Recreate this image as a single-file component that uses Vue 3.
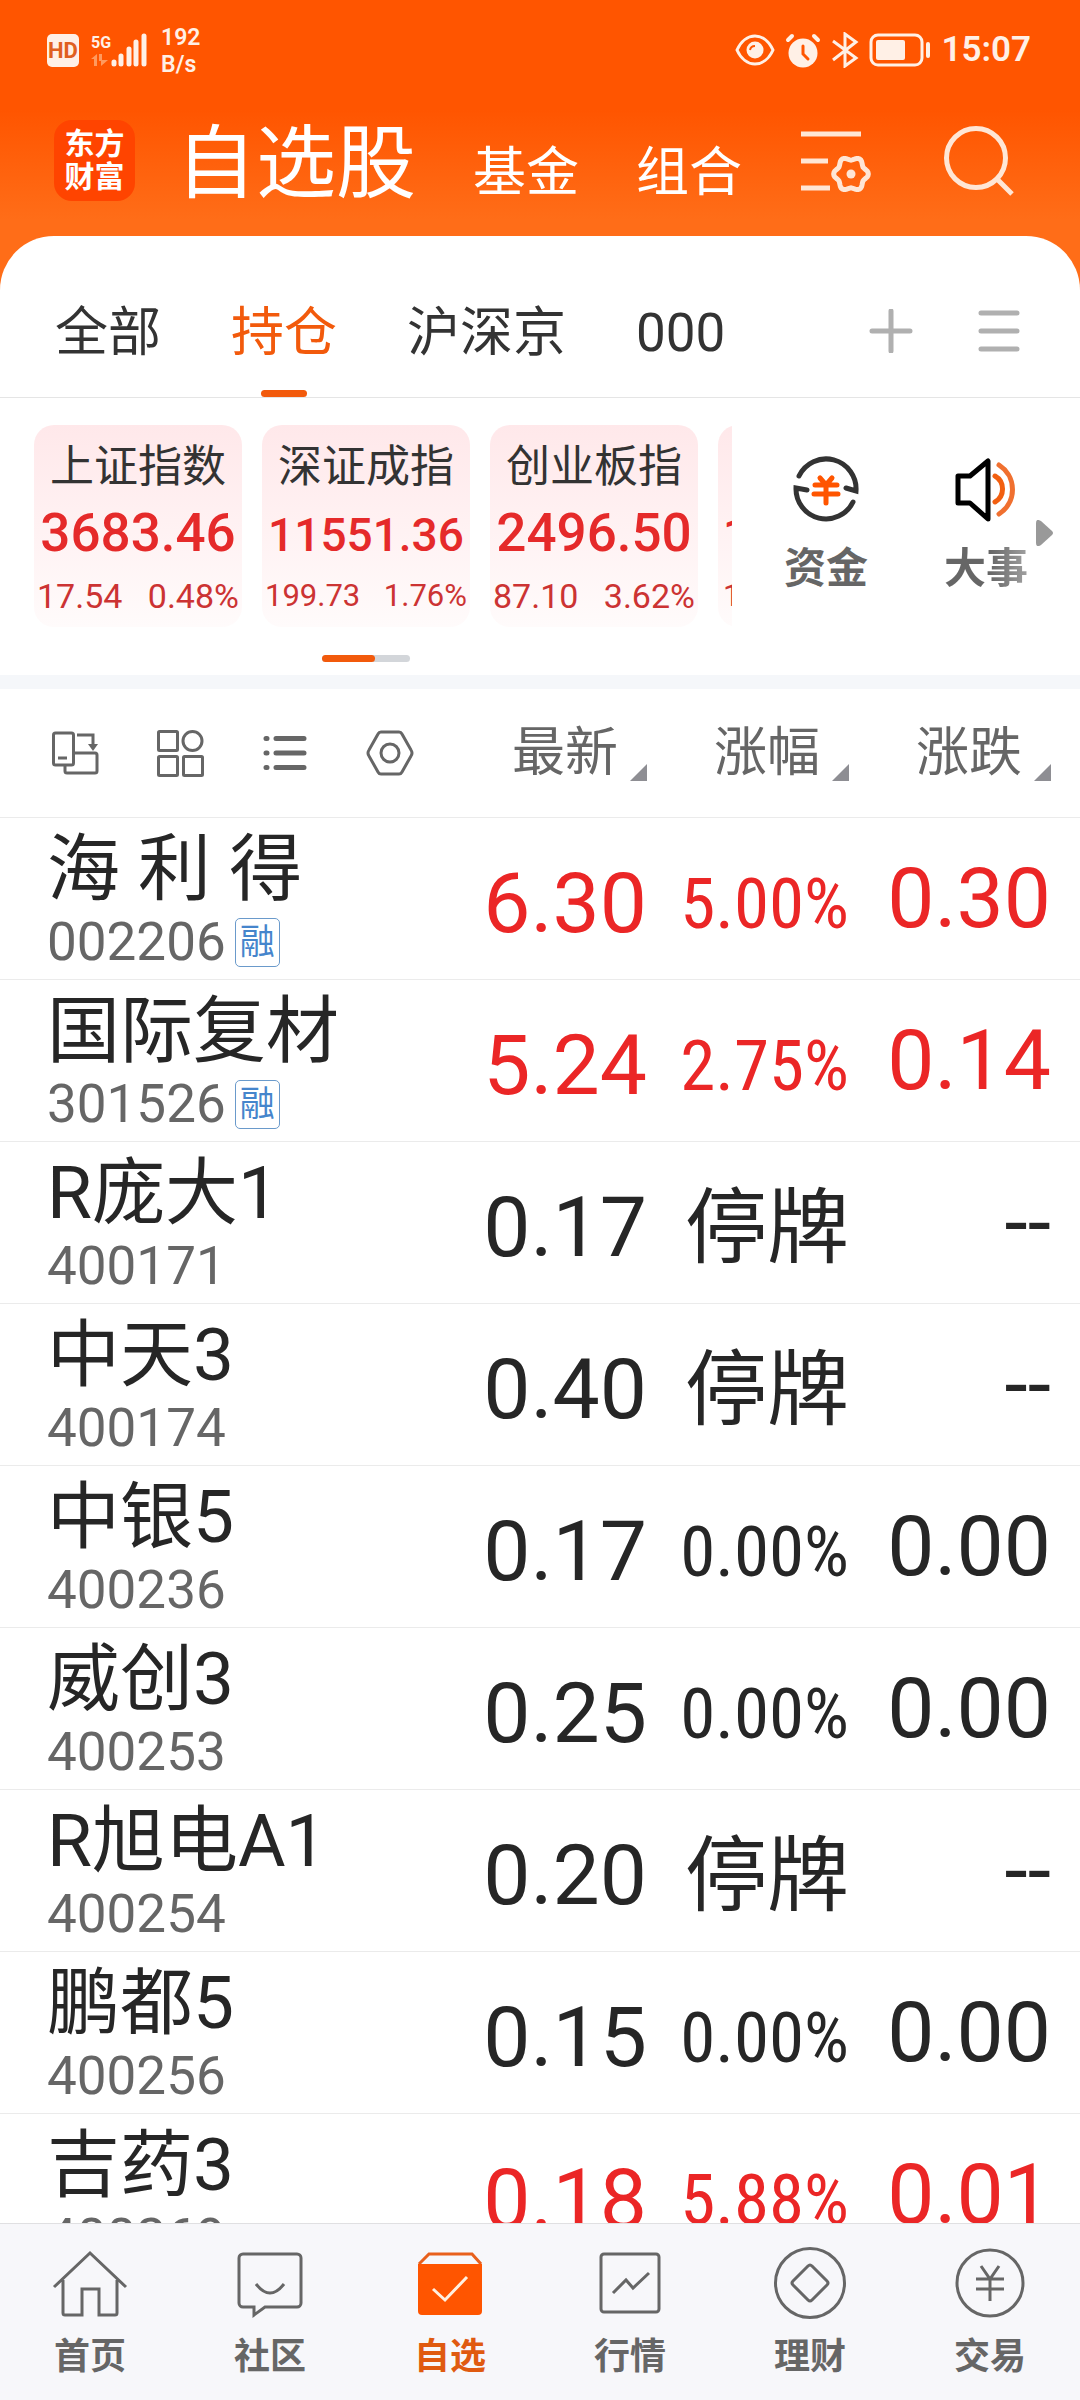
<script setup>
const groups = ['全部', '持仓', '沪深京', '000']
const activeGroup = '持仓'

const indices = [
  { name: '上证指数', value: '3683.46', change: '17.54', rate: '0.48%' },
  { name: '深证成指', value: '11551.36', change: '199.73', rate: '1.76%', compact: true },
  { name: '创业板指', value: '2496.50', change: '87.10', rate: '3.62%' },
]

const stocks = [
  { name: '海 利 得', code: '002206', margin: true, price: '6.30', rate: '5.00%', change: '0.30', up: true },
  { name: '国际复材', code: '301526', margin: true, price: '5.24', rate: '2.75%', change: '0.14', up: true },
  { name: 'R庞大1', code: '400171', price: '0.17', rate: '停牌', change: '--', halted: true },
  { name: '中天3', code: '400174', price: '0.40', rate: '停牌', change: '--', halted: true },
  { name: '中银5', code: '400236', price: '0.17', rate: '0.00%', change: '0.00' },
  { name: '威创3', code: '400253', price: '0.25', rate: '0.00%', change: '0.00' },
  { name: 'R旭电A1', code: '400254', price: '0.20', rate: '停牌', change: '--', halted: true },
  { name: '鹏都5', code: '400256', price: '0.15', rate: '0.00%', change: '0.00' },
  { name: '吉药3', code: '400269', price: '0.18', rate: '5.88%', change: '0.01', up: true },
]

const columns = ['最新', '涨幅', '涨跌']

// Six-lobed outline of the settings gear
const gear = Array.from({ length: 72 }, (_, i) => {
  const a = (i * Math.PI) / 36
  const r = 15.6 + 1.7 * Math.cos(6 * a)
  return `${(52 + r * Math.cos(a)).toFixed(1)},${(50 + r * Math.sin(a)).toFixed(1)}`
}).join(' ')
</script>

<template>
  <div class="app">
    <header class="top">
      <div class="status">
        <div class="status-left">
          <span class="hd">HD</span>
          <div class="net">
            <span class="net-type">5G</span>
            <svg width="18" height="14" viewBox="0 0 18 14" fill="#ff9a5e">
              <path d="M0 6L6 1V13H3V6zM8 1h3v6h6l-7 6V8H8z" />
            </svg>
          </div>
          <svg class="signal" width="36" height="34" viewBox="0 0 36 34" stroke="#fff0e6" stroke-width="5" stroke-linecap="round">
            <path d="M3 29v2M10 23v8M18 16v15M25 9v22M33 3v28" />
          </svg>
          <span class="speed">192<br>B/s</span>
        </div>
        <div class="status-right">
          <svg width="40" height="34" viewBox="0 0 40 34">
            <path d="M2 17C6 8 13 3 20 3s14 5 18 14c-4 9-11 14-18 14S6 26 2 17z" fill="none" stroke="#fff0e6" stroke-width="3" />
            <circle cx="20" cy="17" r="8.5" fill="#fff0e6" />
            <path d="M15 17a5 5 0 0 1 5-4" fill="none" stroke="#ff5500" stroke-width="2" />
          </svg>
          <svg width="36" height="36" viewBox="0 0 36 36" fill="none" stroke-linecap="round">
            <circle cx="18" cy="21" r="14.5" fill="#fff0e6" />
            <path d="M3 8L7 4M33 8L29 4" stroke="#fff0e6" stroke-width="4" />
            <path d="M18 14v8l5 5" stroke="#ff5500" stroke-width="3" />
          </svg>
          <svg width="28" height="36" viewBox="0 0 28 36" fill="none" stroke="#fff0e6" stroke-width="3">
            <path d="M2 9L25 26 14 34V2L25 10 2 28" />
          </svg>
          <svg width="62" height="34" viewBox="0 0 62 34" fill="none">
            <rect x="2" y="2" width="51" height="30" rx="7" stroke="#fff0e6" stroke-width="3" />
            <rect x="7" y="7" width="29" height="20" rx="2" fill="#fff0e6" />
            <path d="M59 11v12" stroke="#fff0e6" stroke-width="4" stroke-linecap="round" />
          </svg>
          <span class="time">15:07</span>
        </div>
      </div>

      <div class="titlebar">
        <span class="logo">东方<br>财富</span>
        <nav class="sections">
          <a href="#" class="current">自选股</a>
          <a href="#">基金</a>
          <a href="#">组合</a>
        </nav>
        <div class="title-actions">
          <button aria-label="设置">
            <svg width="72" height="72" viewBox="0 0 72 72" fill="none" stroke="#ffe6d5" stroke-width="5">
              <path d="M2 10H62M2 37H29M2 64H31" />
              <polygon :points="gear" />
              <circle cx="52" cy="50" r="4.5" fill="#ffe6d5" stroke="none" />
            </svg>
          </button>
          <button aria-label="搜索">
            <svg width="72" height="72" viewBox="0 0 72 72" fill="none" stroke="#ffe6d5" stroke-width="5">
              <circle cx="33" cy="34" r="29.5" />
              <path d="M54 55L69 70" />
            </svg>
          </button>
        </div>
      </div>
    </header>

    <main class="panel">
      <div class="groups">
        <div class="tabs">
          <button v-for="g in groups" :key="g" class="tab" :class="{ active: g === activeGroup }">{{ g }}</button>
        </div>
        <div class="group-actions">
          <button aria-label="添加">
            <svg width="44" height="44" viewBox="0 0 44 44" stroke="#b0b0b0" stroke-width="5" stroke-linecap="round">
              <path d="M22 2V42M3 22H41" />
            </svg>
          </button>
          <button aria-label="管理">
            <svg width="44" height="44" viewBox="0 0 44 44" stroke="#b0b0b0" stroke-width="5" stroke-linecap="round">
              <path d="M4 4H40M4 22H40M4 40H40" />
            </svg>
          </button>
        </div>
      </div>

      <section class="market">
        <div class="carousel">
          <div class="cards">
            <article v-for="i in indices" :key="i.name" class="card" :class="{ compact: i.compact }">
              <h3>{{ i.name }}</h3>
              <p class="value"><span>{{ i.value }}</span></p>
              <p class="delta"><span>{{ i.change }}</span><span>{{ i.rate }}</span></p>
            </article>
            <article class="card compact partial">
              <h3>&nbsp;</h3>
              <p class="value"><span>1</span></p>
              <p class="delta"><span>1</span></p>
            </article>
          </div>
          <div class="progress"><i></i></div>
        </div>
        <div class="shortcuts">
          <button class="shortcut">
            <svg width="80" height="80" viewBox="0 0 80 80" fill="none" stroke-width="5" stroke-linecap="round">
              <path d="M13 27A30 30 0 0 1 70 42L60 39M67 53A30 30 0 0 1 10 39L21 41" stroke="#333" />
              <path d="M34 29L40 36 46 29M29 36H51M28 45H52M40 36V54" stroke="#ff5500" />
            </svg>
            资金
          </button>
          <button class="shortcut faded">
            <svg width="80" height="80" viewBox="0 0 80 80" fill="none" stroke-width="5" stroke-linecap="round" stroke-linejoin="round">
              <path d="M12 27H24L42 12V70L24 54H12Z" stroke="#000" />
              <path d="M49 27A15 15 0 0 1 49 53" stroke="#f25f10" />
              <path d="M53 16A29 29 0 0 1 53 65" stroke="#f07030" />
            </svg>
            大事
          </button>
          <svg class="more" width="17" height="26" viewBox="0 0 17 26" fill="#999">
            <path d="M0 3Q0 -2 5 1L16 11Q18 13 16 15L5 25Q0 28 0 23Z" />
          </svg>
        </div>
      </section>

      <div class="list">
        <table>
          <colgroup>
            <col>
            <col class="c-num">
            <col class="c-num">
            <col class="c-last">
          </colgroup>
          <thead>
            <tr>
              <th>
                <div class="views">
                  <button aria-label="横屏">
                    <svg width="48" height="48" viewBox="0 0 48 48" fill="none" stroke="#666" stroke-width="3">
                      <rect x="2.5" y="4" width="20" height="32" rx="2" />
                      <path d="M7 29H16M26 6H42V16M24 24H44a2 2 0 0 1 2 2V42a2 2 0 0 1-2 2H16a2 2 0 0 1-2-2V37" />
                      <path d="M37 15h10l-5 7z" fill="#666" stroke="none" />
                    </svg>
                  </button>
                  <button aria-label="宫格">
                    <svg width="48" height="48" viewBox="0 0 48 48" fill="none" stroke="#666" stroke-width="3">
                      <rect x="2.5" y="2.5" width="19" height="19" rx="1" />
                      <circle cx="36.5" cy="12" r="9.5" />
                      <rect x="2.5" y="27.5" width="19" height="19" rx="1" />
                      <rect x="27.5" y="27.5" width="19" height="19" rx="1" />
                    </svg>
                  </button>
                  <button aria-label="列表">
                    <svg width="48" height="48" viewBox="0 0 48 48" stroke="#666" stroke-width="5" stroke-linecap="round">
                      <path d="M5 9.5h1M5 24h1M5 38.5h1M15 9.5H43M15 24H43M15 38.5H43" />
                    </svg>
                  </button>
                  <button aria-label="列表设置">
                    <svg width="48" height="48" viewBox="0 0 48 48" fill="none" stroke="#666" stroke-width="3">
                      <path d="M15 3H33Q35 3 36 5L45 21Q47 24 45 27L36 43Q35 45 33 45H15Q13 45 12 43L3 27Q1 24 3 21L12 5Q13 3 15 3Z" />
                      <circle cx="24" cy="24" r="9" />
                    </svg>
                  </button>
                </div>
              </th>
              <th v-for="c in columns" :key="c">
                <button class="sort">
                  {{ c }}
                  <svg width="17" height="17" viewBox="0 0 17 17" fill="#8e8e93"><path d="M17 0V17H0z" /></svg>
                </button>
              </th>
            </tr>
          </thead>
          <tbody>
            <tr v-for="s in stocks" :key="s.code" :class="{ up: s.up }">
              <td class="stock">
                <div class="name">{{ s.name }}</div>
                <div class="code">{{ s.code }}<span v-if="s.margin" class="badge">融</span></div>
              </td>
              <td class="price">{{ s.price }}</td>
              <td class="rate" :class="{ halted: s.halted }">{{ s.rate }}</td>
              <td class="change">{{ s.change }}</td>
            </tr>
          </tbody>
        </table>
      </div>
    </main>

    <nav class="bottom">
      <a href="#">
        <svg width="76" height="76" viewBox="0 0 76 76">
          <path d="M2 41L38 7 74 41M11 34V67q0 2 2 2H30V43H47V69H63q2 0 2-2V34" />
        </svg>
        首页
      </a>
      <a href="#">
        <svg width="76" height="76" viewBox="0 0 76 76">
          <path d="M11 8H65a4 4 0 0 1 4 4V57a4 4 0 0 1-4 4H33L22 69V61H11a4 4 0 0 1-4-4V12a4 4 0 0 1 4-4ZM24 38Q38 56 52 38" />
        </svg>
        社区
      </a>
      <a href="#" class="current">
        <svg width="76" height="76" viewBox="0 0 76 76">
          <path d="M7 18L17 8H60L69 18" />
          <path d="M6 18H70V65a4 4 0 0 1-4 4H10a4 4 0 0 1-4-4Z" fill="#ff5500" stroke="none" />
          <path d="M21 43L33 54 55 31" stroke="#fff0e0" />
        </svg>
        自选
      </a>
      <a href="#">
        <svg width="76" height="76" viewBox="0 0 76 76">
          <rect x="9" y="8" width="58" height="58" rx="3" />
          <path d="M21 47L34 34 41 42 57 27" />
        </svg>
        行情
      </a>
      <a href="#">
        <svg width="76" height="76" viewBox="0 0 76 76">
          <circle cx="38" cy="37" r="34.5" />
          <path d="M36 20Q38 18 40 20L55 35Q57 37 55 39L40 54Q38 56 36 54L21 39Q19 37 21 35Z" />
        </svg>
        理财
      </a>
      <a href="#">
        <svg width="76" height="76" viewBox="0 0 76 76">
          <circle cx="38" cy="37" r="33" />
          <path d="M29 20L38 33 47 20M24 33H52M24 43H52M38 33V55" />
        </svg>
        交易
      </a>
    </nav>
  </div>
</template>

<style>
body {
  background: #fff;
}
</style>

<style scoped>
.app {
  display: flex;
  flex-direction: column;
  height: 100vh;
  font-family: Roboto, "Noto Sans CJK SC", sans-serif;
  color: #262626;
  background: #fff;
}

button {
  padding: 0;
  border: 0;
  background: none;
  font: inherit;
  color: inherit;
}

a {
  color: inherit;
  text-decoration: none;
}

h3,
p {
  margin: 0;
  font-weight: 400;
}

svg {
  display: block;
  flex: none;
}

/* Header */
.top {
  flex: none;
  height: 290px;
  margin-bottom: -54px;
  background: linear-gradient(#ff5500 110px, #ff6d18 220px);
  color: #fff;
}

.status {
  display: flex;
  justify-content: space-between;
  align-items: center;
  height: 100px;
  padding: 0 49px 0 47px;
  color: #fff0e6;
}

.status-left,
.status-right {
  display: flex;
  align-items: center;
}

.status-right {
  gap: 10px;
}

.hd {
  width: 32px;
  height: 33px;
  border-radius: 5px;
  background: #fff0e6;
  color: #e06020;
  font-size: 22px;
  font-weight: 700;
  line-height: 33px;
  text-align: center;
}

.net {
  margin-left: 12px;
}

.net-type {
  display: block;
  font-size: 16px;
  font-weight: 700;
  line-height: 20px;
}

.speed {
  margin-left: 14px;
  padding-top: 2px;
  font-size: 23px;
  font-weight: 600;
  line-height: 27px;
}

.time {
  font-size: 35px;
  font-weight: 600;
  line-height: 40px;
}

.titlebar {
  display: flex;
  align-items: center;
  height: 120px;
  padding: 0 65px 0 54px;
}

.logo {
  width: 81px;
  height: 81px;
  box-sizing: border-box;
  padding-top: 7px;
  border-radius: 18px;
  background: #ff4400;
  font-size: 30px;
  font-weight: 700;
  line-height: 33px;
  text-align: center;
}

.sections {
  display: flex;
  align-items: baseline;
  gap: 57px;
  margin-left: 41px;
  padding-top: 16px;
  font-size: 53px;
  line-height: 100px;
}

.sections .current {
  font-size: 80px;
}

.title-actions {
  display: flex;
  gap: 72px;
  margin-left: auto;
}

/* Group tabs */
.panel {
  flex: 1;
  min-height: 0;
  display: flex;
  flex-direction: column;
  border-radius: 54px 54px 0 0;
  background: #fff;
}

.groups {
  flex: none;
  display: flex;
  justify-content: space-between;
  padding: 28px 59px 0 55px;
  border-bottom: 1px solid #e5e5e5;
}

.tabs {
  display: flex;
  gap: 70px;
}

.tab {
  position: relative;
  height: 133px;
  padding-top: 6px;
  font-size: 53px;
  line-height: 127px;
  color: #333;
}

.tab.active {
  color: #f25a0c;
}

.tab.active::after {
  content: "";
  position: absolute;
  left: 50%;
  bottom: 0;
  width: 46px;
  height: 7px;
  margin-left: -23px;
  border-radius: 4px;
  background: #f25a0c;
}

.group-actions {
  display: flex;
  align-items: center;
  gap: 64px;
}

/* Index cards */
.market {
  flex: none;
  display: flex;
  padding: 27px 0 13px;
  border-bottom: 14px solid #f5f7fa;
}

.carousel {
  flex: 1;
  min-width: 0;
}

.cards {
  display: flex;
  gap: 20px;
  padding-left: 34px;
  overflow: hidden;
}

.card {
  flex: none;
  box-sizing: border-box;
  width: 208px;
  padding: 12px 3px 9px;
  border-radius: 20px;
  background: linear-gradient(#ffe8ea, #fffbfb);
  color: #e52a2a;
  text-align: center;
  white-space: nowrap;
}

.card h3 {
  font-size: 44px;
  line-height: 60px;
  color: #333;
}

.value {
  margin-top: 4px;
  font-size: 53px;
  font-weight: 500;
  line-height: 64px;
}

.value span {
  line-height: 1;
}

.compact .value span {
  font-size: 46px;
}

.delta {
  display: flex;
  justify-content: space-between;
  margin-top: 9px;
  font-size: 34px;
  line-height: 44px;
  color: #cc3333;
}

.compact .delta {
  font-size: 31px;
}

.partial {
  padding-left: 5px;
  text-align: left;
}

.progress {
  width: 88px;
  height: 7px;
  margin: 28px auto 0;
  border-radius: 4px;
  background: #d3d6da;
}

.progress i {
  display: block;
  width: 60%;
  height: 100%;
  border-radius: 4px;
  background: #f25a0c;
}

.shortcuts {
  position: relative;
  flex: none;
  display: flex;
  align-items: flex-start;
  padding: 24px 14px 0;
}

.shortcut {
  display: flex;
  flex-direction: column;
  align-items: center;
  gap: 10px;
  width: 160px;
  font-size: 42px;
  font-weight: 700;
  line-height: 60px;
  color: #666;
}

.faded {
  color: transparent;
  background: linear-gradient(90deg, #666 52%, #aaa 80%);
  background-clip: text;
}

.more {
  position: absolute;
  right: 27px;
  top: 95px;
}

/* Stock table */
.list {
  flex: 1;
  min-height: 0;
  overflow: hidden auto;
  scrollbar-width: none;
}

table {
  width: 100%;
  table-layout: fixed;
  border-spacing: 0;
}

.c-num {
  width: 202px;
}

.c-last {
  width: 231px;
}

th,
td {
  padding: 0;
  border-bottom: 1px solid #ebebeb;
  vertical-align: top;
  text-align: right;
  white-space: nowrap;
}

th:last-child,
td:last-child {
  padding-right: 29px;
}

th {
  height: 128px;
  vertical-align: middle;
  font-weight: 400;
}

.views {
  display: flex;
  gap: 57px;
  padding-left: 51px;
}

.sort {
  display: inline-flex;
  align-items: flex-end;
  gap: 12px;
  font-size: 53px;
  line-height: 56px;
  color: #666;
  vertical-align: middle;
}

td {
  box-sizing: border-box;
  height: 162px;
  font-size: 84px;
  line-height: 100px;
}

.up td {
  color: #eb2626;
}

td.stock {
  padding: 11px 0 0 47px;
  text-align: left;
  color: #262626;
}

.name {
  font-size: 73px;
  line-height: 80px;
}

.code {
  display: flex;
  align-items: center;
  gap: 9px;
  height: 66px;
  font-size: 53px;
  line-height: 66px;
  color: #666;
}

.badge {
  box-sizing: border-box;
  width: 45px;
  height: 49px;
  border: 1px solid #6a9acb;
  border-radius: 5px;
  font-size: 35px;
  line-height: 47px;
  text-align: center;
  color: #4585cc;
}

td.price,
td.rate {
  padding-top: 36px;
}

td.change {
  padding-top: 31px;
}

td.rate {
  font-family: "Roboto Condensed", Roboto, "Noto Sans CJK SC", sans-serif;
  font-size: 71px;
}

td.rate.halted {
  font-family: inherit;
  font-size: 82px;
}

/* Bottom navigation */
.bottom {
  flex: none;
  display: flex;
  border-top: 1px solid #e0e0e2;
  padding: 22px 0 21px;
  background: #f7f7fa;
}

.bottom a {
  flex: 1;
  display: flex;
  flex-direction: column;
  align-items: center;
  gap: 13px;
  font-size: 36px;
  font-weight: 700;
  line-height: 44px;
  color: #666;
}

.bottom svg {
  fill: none;
  stroke: #666;
  stroke-width: 3;
}

.bottom a.current {
  color: #e05a10;
}

.bottom .current svg {
  stroke: #e8601c;
}
</style>
